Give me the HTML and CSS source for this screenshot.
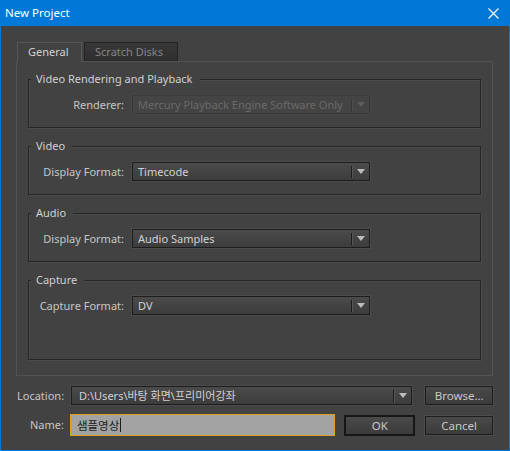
FILE: index.html
```html
<!DOCTYPE html>
<html>
<head>
<meta charset="utf-8">
<link rel="stylesheet" href="styles.css">
</head>
<body>
<div class="window">
  <div class="titlebar">
    <span class="title">New Project</span>
    <svg class="close" width="11" height="11" viewBox="0 0 11 11"><path d="M0.5 0.5L10.5 10.5M10.5 0.5L0.5 10.5" stroke="#ffffff" stroke-width="1.1" fill="none"/></svg>
  </div>
  <div class="body">
    <div class="tabs">
      <div class="tab active">General</div>
      <div class="tab inactive">Scratch Disks</div>
    </div>
    <div class="panel">
      <div class="group">
        <div class="group-title">Video Rendering and Playback</div>
        <div class="row">
          <span class="label">Renderer:</span>
          <div class="combo disabled">
            <span class="combo-text">Mercury Playback Engine Software Only</span>
            <span class="combo-btn"><svg width="8" height="5" viewBox="0 0 8 5"><path d="M0 0H8L4 5Z"/></svg></span>
          </div>
        </div>
      </div>
      <div class="group">
        <div class="group-title">Video</div>
        <div class="row">
          <span class="label">Display Format:</span>
          <div class="combo">
            <span class="combo-text">Timecode</span>
            <span class="combo-btn"><svg width="8" height="5" viewBox="0 0 8 5"><path d="M0 0H8L4 5Z"/></svg></span>
          </div>
        </div>
      </div>
      <div class="group">
        <div class="group-title">Audio</div>
        <div class="row">
          <span class="label">Display Format:</span>
          <div class="combo">
            <span class="combo-text">Audio Samples</span>
            <span class="combo-btn"><svg width="8" height="5" viewBox="0 0 8 5"><path d="M0 0H8L4 5Z"/></svg></span>
          </div>
        </div>
      </div>
      <div class="group group-tall">
        <div class="group-title">Capture</div>
        <div class="row">
          <span class="label">Capture Format:</span>
          <div class="combo">
            <span class="combo-text">DV</span>
            <span class="combo-btn"><svg width="8" height="5" viewBox="0 0 8 5"><path d="M0 0H8L4 5Z"/></svg></span>
          </div>
        </div>
      </div>
    </div>
    <div class="bottom-row loc-row">
      <span class="blabel">Location:</span>
      <div class="combo loc-combo">
        <span class="combo-text loc-text">D:\Users\바탕 화면\프리미어강좌</span>
        <span class="combo-btn"><svg width="8" height="5" viewBox="0 0 8 5"><path d="M0 0H8L4 5Z"/></svg></span>
      </div>
      <div class="button browse">Browse...</div>
    </div>
    <div class="bottom-row name-row">
      <span class="blabel name-label">Name:</span>
      <div class="name-input"><span class="name-text">샘플영상</span><span class="caret"></span></div>
      <div class="button ok">OK</div>
      <div class="button cancel">Cancel</div>
    </div>
  </div>
</div>
</body>
</html>
```

FILE: styles.css
```css
html, body {
  margin: 0;
  padding: 0;
  background: #0078d7;
}
body {
  font-family: "Noto Sans", "Noto Sans CJK KR", sans-serif;
  font-size: 11px;
  color: #c8c8c8;
}
.window {
  width: 510px;
  height: 451px;
  background: #0078d7;
  display: flex;
  flex-direction: column;
  box-sizing: border-box;
}
.titlebar {
  height: 26px;
  flex: none;
  display: flex;
  align-items: center;
  justify-content: space-between;
  padding: 0 11px 0 5px;
  color: #ffffff;
  font-size: 11.5px;
}
.title {
  line-height: 16px;
}
.close {
  display: block;
}
.body {
  flex: 1;
  margin: 0 1px 1px 1px;
  background: #424242;
  padding: 16px 16px 0 15px;
}
.tabs {
  display: flex;
  gap: 2px;
  padding-left: 1px;
  height: 19px;
}
.tab {
  box-sizing: border-box;
  height: 19px;
  line-height: 17px;
  padding-left: 10px;
  font-size: 11px;
}
.tab.active {
  width: 65px;
  height: 20px;
  margin-bottom: -1px;
  position: relative;
  z-index: 1;
  background: #424242;
  border: 1px solid #565656;
  border-bottom: none;
  color: #d2d2d2;
}
.tab.inactive {
  width: 94px;
  background: linear-gradient(#383838, #2f2f2f);
  border: 1px solid #242424;
  border-bottom-color: #2a2a2a;
  color: #858585;
}
.panel {
  border: 1px solid #535353;
  padding: 17px 11px 15px 11px;
}
.group {
  border: 1px solid #262626;
  box-shadow: 1px 1px 0 #4b4b4b, inset 1px 1px 0 #4b4b4b;
  padding: 0 0 13px 0;
}
.group + .group {
  margin-top: 18px;
}
.group-tall {
  padding-bottom: 44px;
}
.group-title {
  width: fit-content;
  margin: -9px 0 0 2px;
  padding: 0 7px 0 5px;
  background: #424242;
  line-height: 16px;
  height: 16px;
  color: #d0d0d0;
}
.row {
  display: flex;
  align-items: center;
  margin-top: 8px;
  height: 19px;
}
.label {
  width: 95px;
  margin-right: 8px;
  text-align: right;
  color: #c6c6c6;
  line-height: 16px;
}
.combo {
  box-sizing: border-box;
  width: 238px;
  height: 19px;
  display: flex;
  align-items: center;
  border: 1px solid #1d1d1d;
  background: linear-gradient(#4b4b4b, #3c3c3c);
  box-shadow: 0 0 0 1px #4b4b4b;
}
.combo-text {
  flex: 1;
  padding-left: 5px;
  color: #d2d2d2;
  white-space: nowrap;
  overflow: hidden;
  line-height: 16px;
}
.combo-btn {
  width: 17px;
  height: 12px;
  border-left: 1px solid #1d1d1d;
  box-shadow: inset 1px 0 0 #555555;
  display: flex;
  align-items: center;
  justify-content: center;
}
.combo-btn svg {
  display: block;
  fill: #bdbdbd;
}
.combo.disabled {
  background: #444444;
  border-color: #393939;
  box-shadow: 0 0 0 1px #464646;
}
.combo.disabled .combo-text {
  color: #6a6a6a;
}
.combo.disabled .combo-btn {
  border-left-color: #363636;
  box-shadow: inset 1px 0 0 #4d4d4d;
}
.combo.disabled .combo-btn svg {
  fill: #5c5c5c;
}
.bottom-row {
  display: flex;
  align-items: center;
}
.loc-row {
  margin-top: 10px;
  height: 19px;
}
.name-row {
  margin-top: 9px;
  height: 22px;
}
.blabel {
  width: 47px;
  margin-left: 1px;
  margin-right: 7px;
  text-align: right;
  color: #c6c6c6;
  line-height: 16px;
}
.name-label {
  margin-right: 6px;
}
.loc-combo {
  width: 343px;
}
.loc-text {
  padding-left: 7px;
  font-size: 11px;
}
.button {
  box-sizing: border-box;
  height: 19px;
  border: 1px solid #1d1d1d;
  background: linear-gradient(#4a4a4a, #3b3b3b);
  box-shadow: 0 0 0 1px #4c4c4c;
  color: #c8c8c8;
  text-align: center;
  line-height: 17px;
  font-size: 11.5px;
}
.browse {
  width: 68px;
  margin-left: 13px;
}
.name-input {
  box-sizing: border-box;
  width: 266px;
  height: 22px;
  border: 1px solid #e0a11a;
  background: #a3a3a3;
  display: flex;
  align-items: center;
  padding-left: 6px;
  color: #1e1e1e;
  font-family: "Noto Sans CJK KR", sans-serif;
  font-size: 11.5px;
  line-height: 16px;
}
.caret {
  width: 1px;
  height: 14px;
  margin-left: 1px;
  background: #1e1e1e;
}
.ok {
  width: 71px;
  height: 21px;
  margin-left: 9px;
  border: 2px solid #161616;
  box-shadow: none;
  line-height: 17px;
}
.cancel {
  width: 68px;
  margin-left: 10px;
}
```
